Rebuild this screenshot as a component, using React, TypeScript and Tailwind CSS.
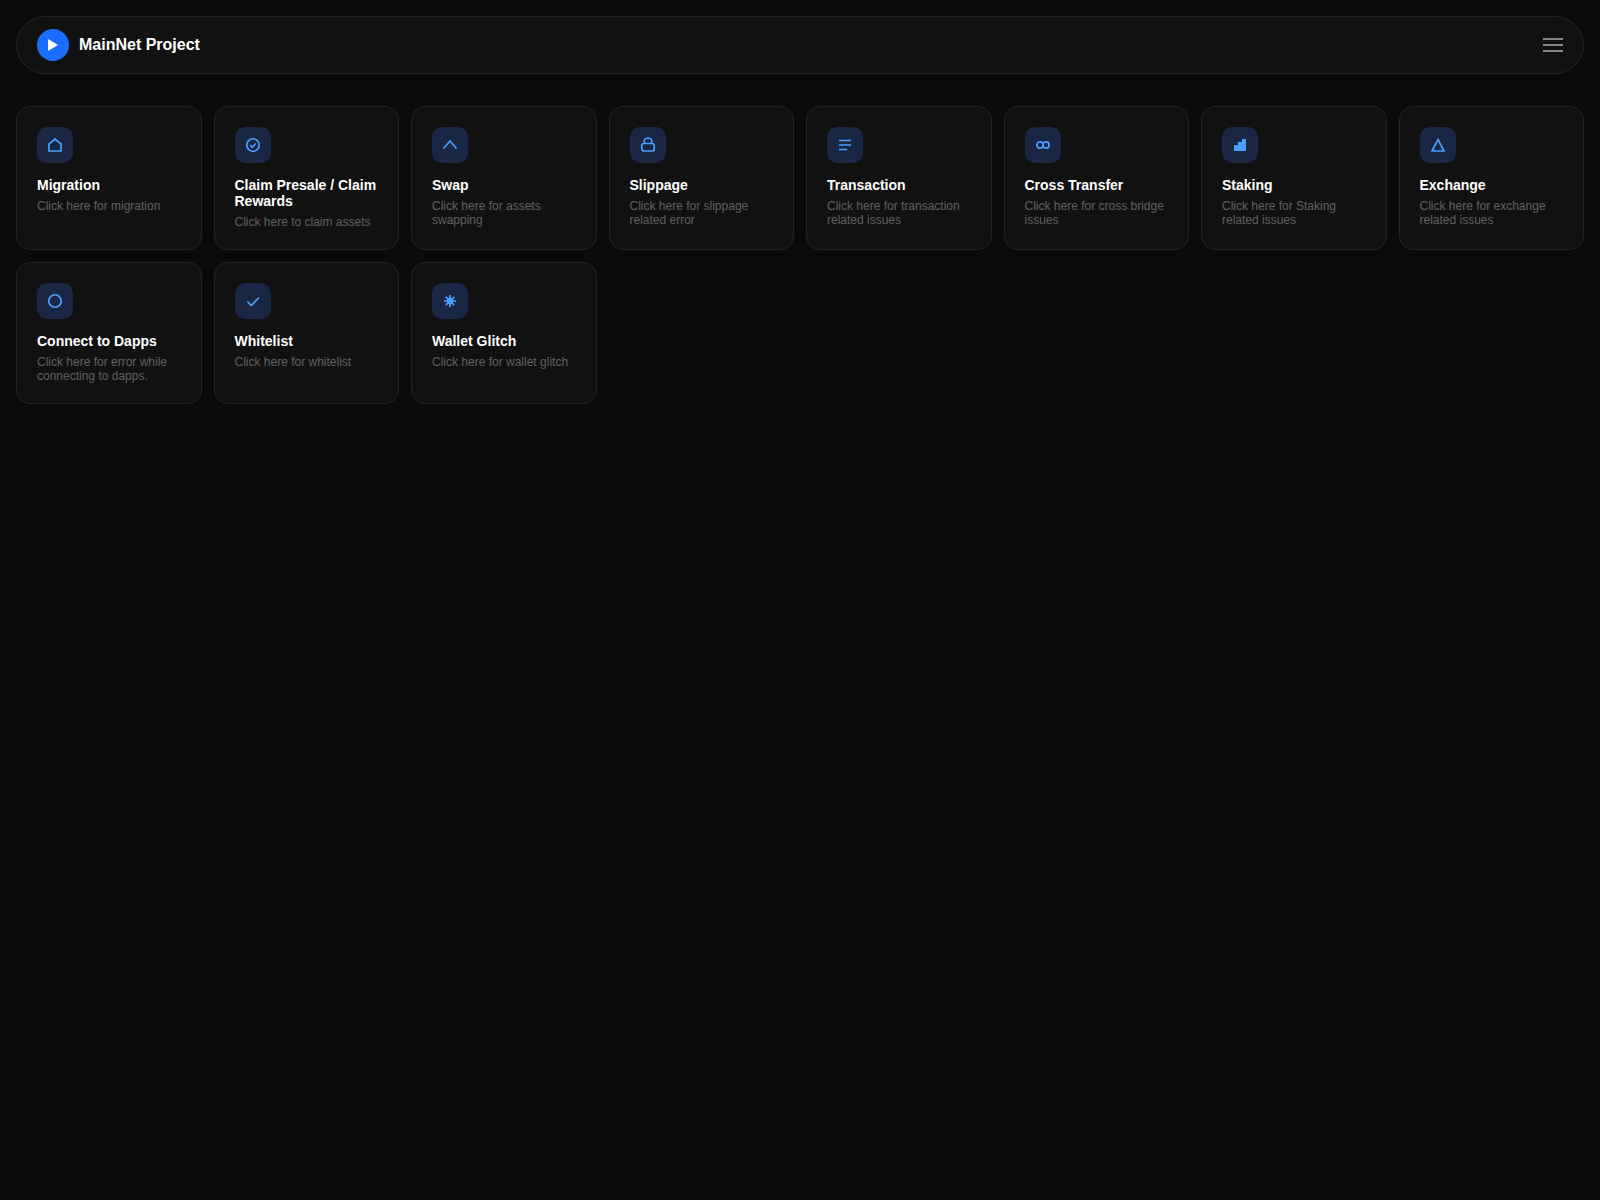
const cards = [
  {
    title: "Migration",
    desc: "Click here for migration",
    icon: <path d="M2 14V7l6-5 6 5v7z" />,
  },
  {
    title: "Claim Presale / Claim Rewards",
    desc: "Click here to claim assets",
    icon: (
      <>
        <circle cx="8" cy="8" r="6.250" />
        <path d="M5.250 8.250l2 2 3.500-3.750" />
      </>
    ),
  },
  { title: "Swap", desc: "Click here for assets swapping", icon: <path d="M1.500 11.500L8 4l6.500 7.500" /> },
  {
    title: "Slippage",
    desc: "Click here for slippage related error",
    icon: (
      <>
        <rect x="1.750" y="6.500" width="12.500" height="7.500" rx="2" />
        <path d="M4.250 6.500V4.250a3.750 3.250 0 0 1 7.500 0V6.500" />
      </>
    ),
  },
  { title: "Transaction", desc: "Click here for transaction related issues", icon: <path d="M2 3.500h12M2 8h12M2 12.500h8" /> },
  {
    title: "Cross Transfer",
    desc: "Click here for cross bridge issues",
    icon: (
      <>
        <circle cx="5" cy="8" r="3.150" />
        <circle cx="11" cy="8" r="3.150" />
      </>
    ),
  },
  {
    title: "Staking",
    desc: "Click here for Staking related issues",
    icon: <path d="M2 14V8h4V5h4V2h4v12z" fill="#4a9eff" stroke="none" />,
  },
  { title: "Exchange", desc: "Click here for exchange related issues", icon: <path d="M8 2.500L14 14H2z" /> },
  { title: "Connect to Dapps", desc: "Click here for error while connecting to dapps.", icon: <circle cx="8" cy="8" r="6.250" /> },
  { title: "Whitelist", desc: "Click here for whitelist", icon: <path d="M2.500 8.500L6 12.500l8-8" /> },
  {
    title: "Wallet Glitch",
    desc: "Click here for wallet glitch",
    icon: (
      <>
        <circle cx="8" cy="8" r="2.500" fill="#4a9eff" />
        <path d="M8 2v12M2 8h12M3.800 3.800l8.400 8.400M12.200 3.800l-8.400 8.400" />
      </>
    ),
  },
];

export default function App() {
  return (
    <div className="min-h-screen bg-[#0a0a0a] p-4 font-['Liberation_Sans',Arial,sans-serif]">
      <header className="mb-8 flex h-[58px] items-center justify-between rounded-[29px] border border-[#242424] bg-[#111111] px-5">
        <div className="flex items-center gap-2.5">
          <div className="flex h-8 w-8 items-center justify-center rounded-full bg-[#1a6dff]">
            <svg width="12" height="14" viewBox="0 0 12 14">
              <path d="M1 1l10 6-10 6z" fill="#fff" />
            </svg>
          </div>
          <span className="text-base font-bold text-white">MainNet Project</span>
        </div>
        <div className="flex w-5 flex-col gap-1">
          <span className="h-0.5 bg-[#888888]" />
          <span className="h-0.5 bg-[#888888]" />
          <span className="h-0.5 bg-[#888888]" />
        </div>
      </header>
      <div className="grid grid-cols-8 gap-3">
        {cards.map((c) => (
          <div key={c.title} className="rounded-[14px] border border-[#242424] bg-[#111111] p-5">
            <div className="mb-3.5 flex h-9 w-9 items-center justify-center rounded-[10px] bg-[#1a2744]">
              <svg width="16" height="16" viewBox="0 0 16 16" fill="none" stroke="#4a9eff" strokeWidth="1.700">
                {c.icon}
              </svg>
            </div>
            <h3 className="mb-1.5 text-sm leading-4 font-bold text-white">{c.title}</h3>
            <p className="text-xs leading-[14px] text-[#606060]">{c.desc}</p>
          </div>
        ))}
      </div>
    </div>
  );
}
